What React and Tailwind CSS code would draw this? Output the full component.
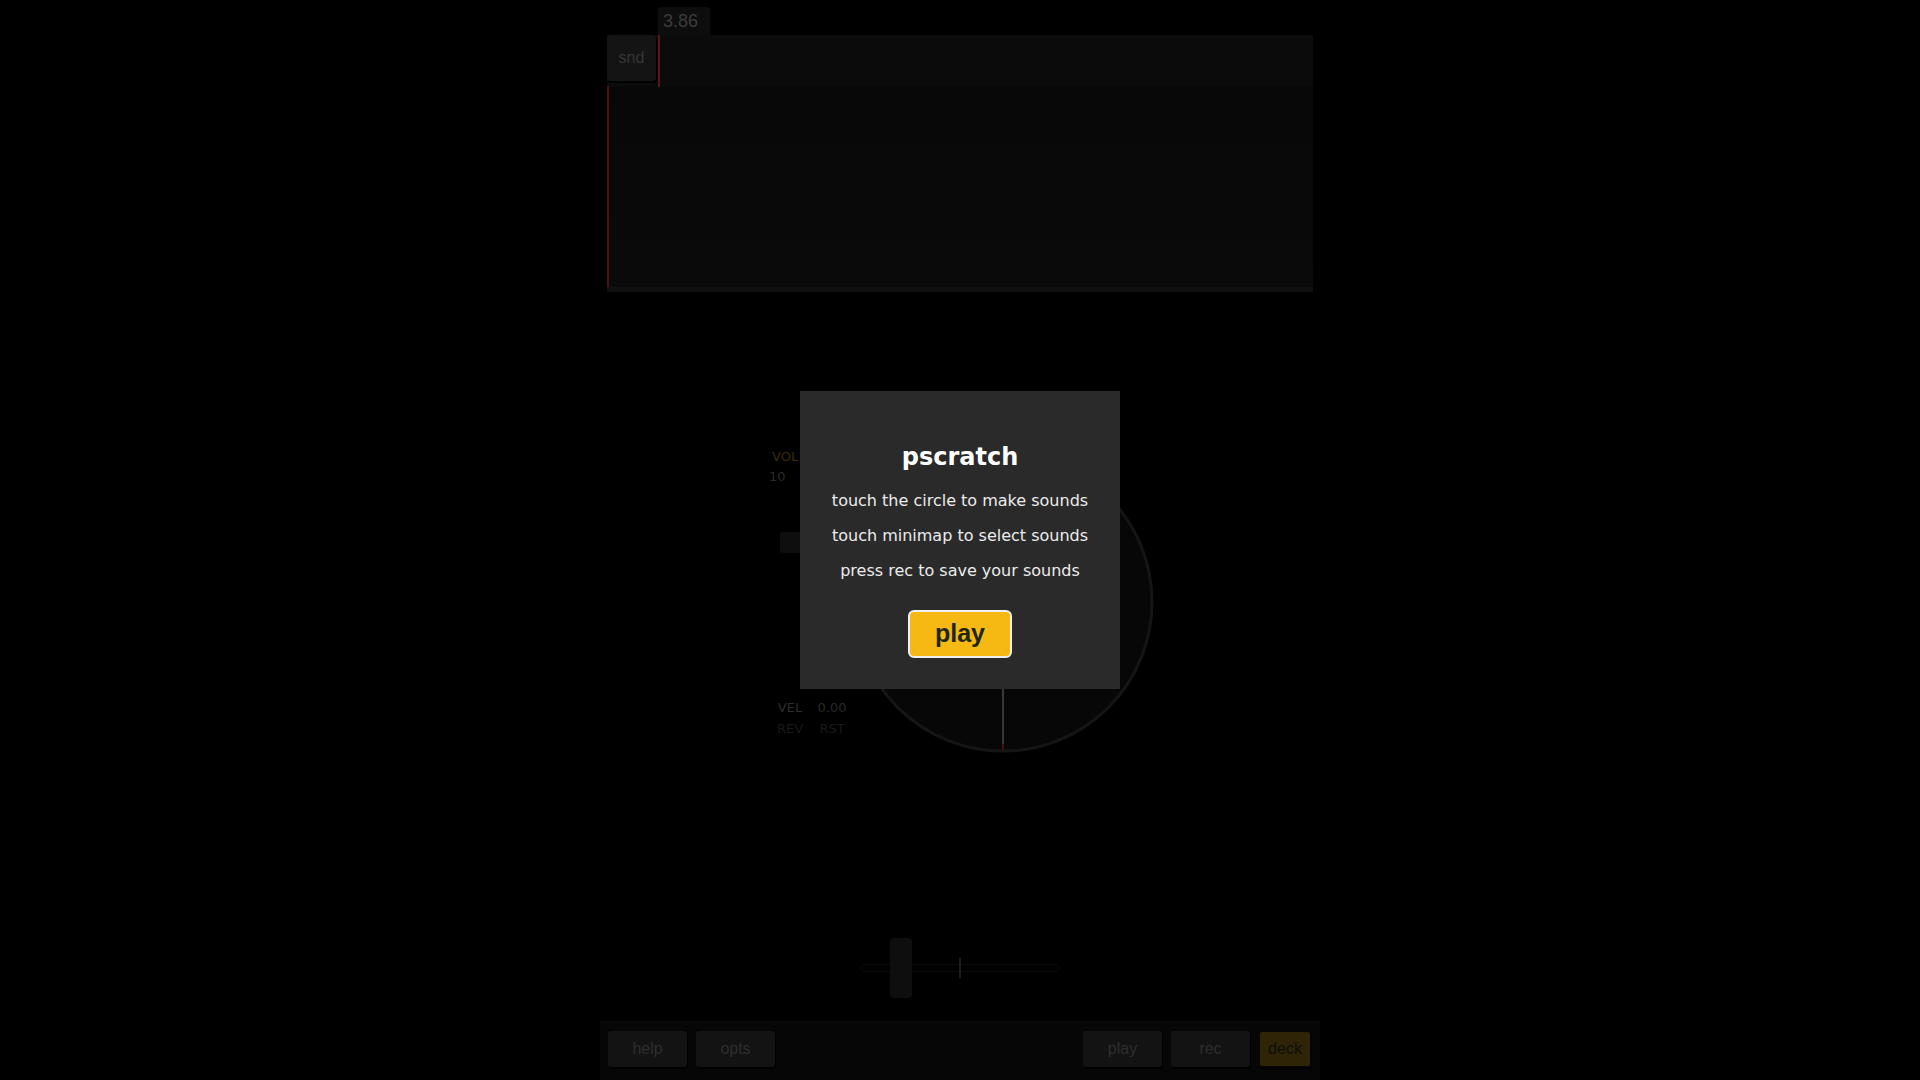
import { useState } from 'react';

const sans = { fontFamily: '"DejaVu Sans", sans-serif' };
const arial = { fontFamily: '"Liberation Sans", Arial, sans-serif' };

function BarButton({ label, active }) {
  return (
    <button
      className={
        active
          ? 'h-[36px] w-[52px] rounded-[3px] border border-[#050505] bg-[#2f2406] text-[16px] text-[#0e0e0e] shadow-[1px_2px_0_#000]'
          : 'h-[36px] w-[79px] rounded-[3px] bg-[#131313] text-[16px] text-[#2e2e2e] shadow-[1px_2px_0_#000]'
      }
      style={arial}
    >
      {label}
    </button>
  );
}

function Platter() {
  // turntable circle with needle pointing down
  return (
    <svg width="304" height="304" viewBox="0 0 304 304" className="mt-[1px] block">
      <circle cx="152" cy="152" r="149" fill="#070707" stroke="#151515" strokeWidth="3" />
      <line x1="152" y1="152" x2="152" y2="298" stroke="#383838" strokeWidth="2" />
      <line x1="152" y1="294" x2="152" y2="300" stroke="#4a0c0c" strokeWidth="2" />
    </svg>
  );
}

function Crossfader() {
  return (
    <div className="relative mx-auto h-[60px] w-[200px]">
      <div className="absolute left-0 right-0 top-[26px] h-[8px] rounded-full border border-[#0b0b0b] bg-black" />
      <div className="absolute left-[99px] top-[20px] h-[20px] w-[2px] bg-[#1c1c1c]" />
      <div className="absolute left-[30px] top-0 h-[60px] w-[22px] rounded-[4px] bg-[#0e0e0e]" />
    </div>
  );
}

export default function App() {
  const [showIntro, setShowIntro] = useState(true);

  return (
    <div className="flex min-h-screen justify-center bg-black" style={arial}>
      <div className="flex h-[1080px] w-[720px] flex-col bg-black">
        {/* Minimap + waveform */}
        <div className="px-[7px]">
          <div className="flex h-[35px] items-end">
            <div className="ml-[51px] flex h-[28px] w-[52px] items-center rounded-t-[3px] bg-[#0d0d0d] pl-[5px] text-[18px] text-[#3c3c3c]">
              3.86
            </div>
          </div>
          <div className="flex h-[51px] bg-[#0b0b0b]">
            <div className="flex h-[46px] w-[49px] items-center justify-center rounded-[3px] bg-[#141414] text-[16px] text-[#363636] shadow-[1px_2px_0_#000]">
              snd
            </div>
            <div className="ml-[2px] h-[52px] w-[2px] bg-[#5a1414]" />
          </div>
          <div className="h-[201px] border-l-2 border-[#4e1111] bg-gradient-to-b from-[#080808] to-[#0a0a0a]" />
          <div className="h-[5px] bg-[#111111]" />
        </div>

        {/* Deck controls */}
        <div className="flex flex-1 flex-col">
          <div className="mt-[157px] flex pl-[169px]">
            <div className="flex w-[82px] flex-col" style={sans}>
              <div className="pl-[3px] text-[13px] leading-[16px] text-[#3b2d08]">VOL</div>
              <div className="mt-[4px] text-[13px] leading-[16px] text-[#2a2a2a]">10</div>
              <div className="ml-[11px] mt-[47px] h-[21px] w-[60px] rounded-[3px] bg-[#0e0e0e]" />
              <div className="mt-[147px] grid grid-cols-[42px_42px] text-center text-[13px] leading-[16px]">
                <span className="text-[#2e2e2e]">VEL</span>
                <span className="text-[#2a2a2a]">0.00</span>
                <span className="mt-[5px] text-[#191919]">REV</span>
                <span className="mt-[5px] text-[#191919]">RST</span>
              </div>
            </div>
            <Platter />
          </div>
          <div className="mt-[184px]">
            <Crossfader />
          </div>
        </div>

        {/* Bottom bar */}
        <div className="flex h-[59px] items-start justify-between border-t border-[#0c0c0c] bg-[#060606] pl-[8px] pr-[9px] pt-[9px]">
          <div className="flex gap-[9px]">
            <BarButton label="help" />
            <BarButton label="opts" />
          </div>
          <div className="flex gap-[9px]">
            <BarButton label="play" />
            <BarButton label="rec" />
            <BarButton label="deck" active />
          </div>
        </div>
      </div>

      {showIntro && (
        <div className="fixed inset-0 flex items-center justify-center">
          <div className="flex h-[298px] w-[320px] flex-col items-center bg-[#2a2a2a] pt-[52px] text-center" style={sans}>
            <h1 className="text-[24px] font-bold leading-[28px] text-white">pscratch</h1>
            <p className="mt-[20px] text-[16px] leading-[19px] text-[#ececec]">touch the circle to make sounds</p>
            <p className="mt-[16px] text-[16px] leading-[19px] text-[#ececec]">touch minimap to select sounds</p>
            <p className="mt-[16px] text-[16px] leading-[19px] text-[#ececec]">press rec to save your sounds</p>
            <button
              onClick={() => setShowIntro(false)}
              className="mt-[30px] h-[48px] w-[104px] rounded-[6px] border-2 border-[#f0f0f0] bg-[#f6b813] text-[25px] font-bold text-[#1c2610]"
              style={arial}
            >
              play
            </button>
          </div>
        </div>
      )}
    </div>
  );
}
